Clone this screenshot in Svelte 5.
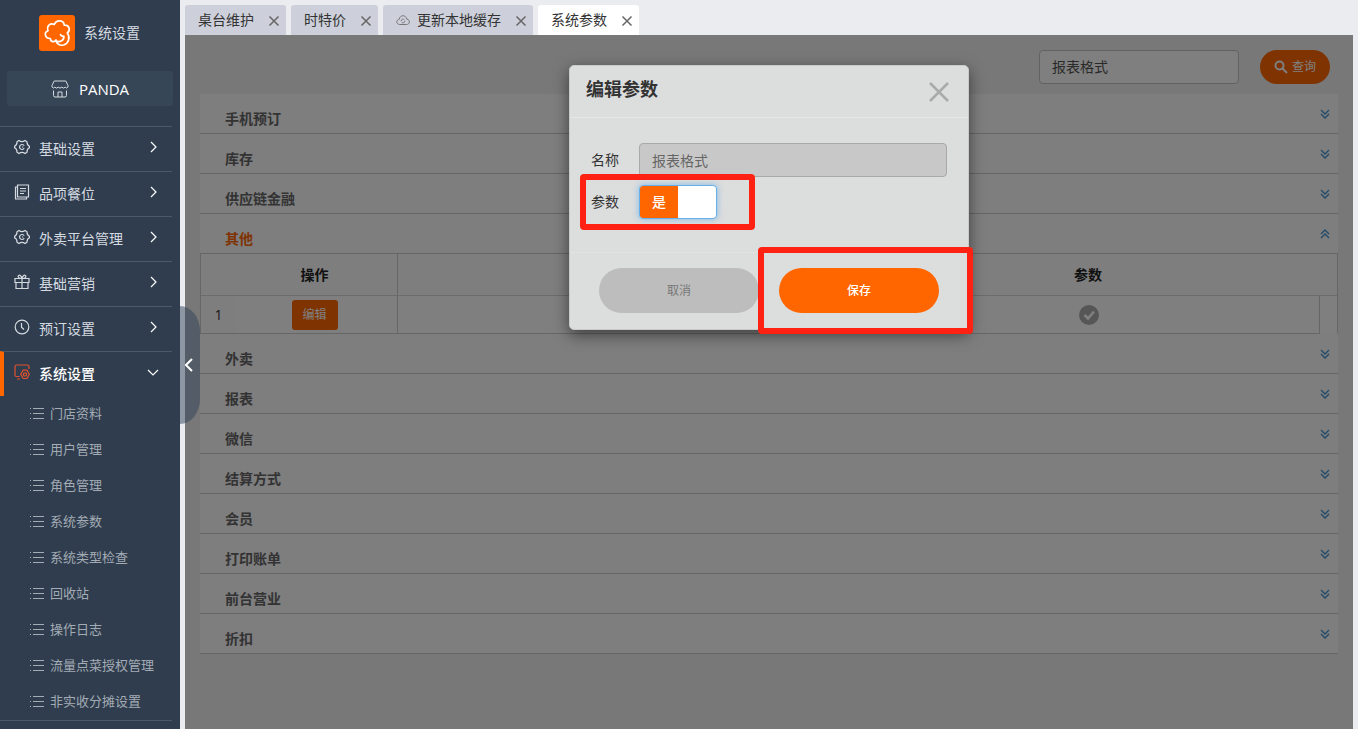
<script>
  let enabled = $state(true);
  let keyword = $state('报表格式');
  let paramName = $state('报表格式');

  const menus = [
    { name: '基础设置', icon: 'gear' },
    { name: '品项餐位', icon: 'doc' },
    { name: '外卖平台管理', icon: 'gear' },
    { name: '基础营销', icon: 'gift' },
    { name: '预订设置', icon: 'clock' }
  ];

  const subMenus = [
    '门店资料',
    '用户管理',
    '角色管理',
    '系统参数',
    '系统类型检查',
    '回收站',
    '操作日志',
    '流量点菜授权管理',
    '非实收分摊设置'
  ];

  const tabs = [
    { name: '桌台维护' },
    { name: '时特价' },
    { name: '更新本地缓存', cloud: true },
    { name: '系统参数', active: true }
  ];

  const groups = [
    '手机预订',
    '库存',
    '供应链金融',
    '其他',
    '外卖',
    '报表',
    '微信',
    '结算方式',
    '会员',
    '打印账单',
    '前台营业',
    '折扣'
  ];
  let opened = $state('其他');
</script>

{#snippet menuIcon(icon)}
  <svg class="menu-icon" viewBox="0 0 16 16" aria-hidden="true">
    {#if icon === 'gear'}
      <path d="M5 1.5 Q8 3.7 11 1.5 L13 2.8 Q12.8 6 15.4 7.2 V8.8 Q12.8 10 13 13.2 L11 14.5 Q8 12.3 5 14.5 L3 13.2 Q3.2 10 .6 8.8 V7.2 Q3.2 6 3 2.8 Z" />
      <path d="M10.2 6.7 A2.5 2.5 0 1 0 10.2 9.3 M8 8 H9.3" />
    {:else if icon === 'doc'}
      <path d="M3.5 1 H14.5 V13 H3.5 Z M3.5 3 H1.5 V15 H12.5 V13 M6 4.5 H12 M6 7 H12 M6 9.5 H10" />
    {:else if icon === 'gift'}
      <path d="M1 4.5 H15 V8.5 H1 Z M2 8.5 V14.5 H14 V8.5 M8 4.5 V14.5 M8 4.5 C5 4.5 3.5 3 4.5 1.7 C5.8 .4 7.5 2 8 4.5 C8.5 2 10.2 .4 11.5 1.7 C12.5 3 11 4.5 8 4.5" />
    {:else if icon === 'clock'}
      <circle cx="8" cy="8" r="6.8" />
      <path d="M7.5 4 V8.3 L10 10.5" />
    {:else}
      <path d="M5.5 12.5 H2.5 Q1 12.5 1 11 V2.5 Q1 1 2.5 1 H13.5 Q15 1 15 2.5 V5 M3 15 H6" />
      <path d="M9.2 6.2 H13 L15.3 10.2 L13 14.5 H9.2 L6.7 10.2 Z" />
      <circle cx="11" cy="10.4" r="1.6" />
    {/if}
  </svg>
{/snippet}

<div class="layout">
  <aside class="sidebar">
    <div class="brand">
      <svg class="logo" viewBox="0 0 36 36" aria-hidden="true">
        <rect width="36" height="36" rx="3" fill="#ff6600" />
        <path
          d="M17 25 C15.5 27.5 11.5 27.3 11.3 23.5 C6 23.5 4.5 17.5 9 15.7 C7.5 10.5 11.5 7.7 15.3 9.5 C17.5 4.3 25 4.8 25.2 10.2 C30.5 9.8 31.8 15.5 28.3 18 C31.5 22 29.8 28.5 24.5 30 C20.5 31 17.2 28.3 17.2 26 C21 27.5 25.5 25.5 24.8 21.2 C23.2 21.4 22 20.8 21.5 19.6"
          fill="none" stroke="#fff" stroke-width="1.7" stroke-linecap="round" stroke-linejoin="round"
        />
      </svg>
      <span>系统设置</span>
    </div>

    <button class="shop">
      <svg viewBox="0 0 18 18" aria-hidden="true">
        <path d="M3.2 1 H14.8 L17 5.5 V7 Q15.7 9 14.2 7.2 Q12.5 9 10.8 7.2 Q9 9 7.2 7.2 Q5.5 9 3.8 7.2 Q2.3 9 1 7 V5.5 Z M2.5 10.5 V15.5 Q2.5 17 4 17 H14 Q15.5 17 15.5 15.5 V10.5 M7 17 V12 H11 V17" />
      </svg>
      <span>PANDA</span>
    </button>

    <nav>
      {#each menus as menu}
        <a class="menu" href="#menu">
          {@render menuIcon(menu.icon)}
          <span>{menu.name}</span>
          <svg class="arrow" viewBox="0 0 12 12" aria-hidden="true"><path d="M4 1 L9 6 L4 11" /></svg>
        </a>
      {/each}
      <a class="menu current" href="#menu">
        {@render menuIcon('system')}
        <span>系统设置</span>
        <svg class="arrow" viewBox="0 0 12 12" aria-hidden="true"><path d="M1 4 L6 9 L11 4" /></svg>
      </a>
      <ul>
        {#each subMenus as sub}
          <li>
            <a href="#sub">
              <svg viewBox="0 0 14 12" aria-hidden="true">
                <path d="M0 .5 H1 M3 .5 H14 M0 5.5 H1 M3 5.5 H14 M0 10.5 H1 M3 10.5 H14" />
              </svg>
              {sub}
            </a>
          </li>
        {/each}
      </ul>
    </nav>

    <button class="collapse" aria-label="收起">
      <svg viewBox="0 0 8 14" aria-hidden="true"><path d="M7 1 L1 7 L7 13" /></svg>
    </button>
  </aside>

  <main>
    <div class="tabs">
      {#each tabs as tab}
        <div class="tab" class:active={tab.active}>
          {#if tab.cloud}
            <svg class="cloud" viewBox="0 0 14 12" aria-hidden="true">
              <path d="M3.8 10.5 C0 10.5 -.2 5.8 3.2 5.4 C3.6 .8 10.2 .4 10.8 5.2 C14.4 5.6 14.2 10.5 10.5 10.5 Z M5.2 7 A1.8 1.8 0 0 1 8.5 6 M8.8 7 A1.8 1.8 0 0 1 5.5 8" />
            </svg>
          {/if}
          <span>{tab.name}</span>
          <button class="tab-close" aria-label="关闭">
            <svg viewBox="0 0 12 12" aria-hidden="true"><path d="M1.5 1.5 L10.5 10.5 M10.5 1.5 L1.5 10.5" /></svg>
          </button>
        </div>
      {/each}
    </div>

    <section class="content">
      <div class="toolbar">
        <input type="text" aria-label="参数名称" bind:value={keyword} />
        <button class="search">
          <svg viewBox="0 0 14 14" aria-hidden="true">
            <circle cx="5.5" cy="5.5" r="4" />
            <path d="M8.5 8.5 L13 13" />
          </svg>
          查询
        </button>
      </div>

      {#each groups as group}
        <button class="group" class:open={group === opened} onclick={() => (opened = group)}>
          <span>{group}</span>
          <svg viewBox="0 0 10 10" aria-hidden="true"><path d="M1 1 L5 5 L9 1 M1 5 L5 9 L9 5" /></svg>
        </button>
        {#if group === opened}
          <table>
            <colgroup>
              <col class="col-no" />
              <col class="col-action" />
              <col />
              <col />
              <col class="col-gutter" />
            </colgroup>
            <thead>
              <tr>
                <th></th>
                <th class="line action">操作</th>
                <th></th>
                <th class="line param" colspan="2">参数</th>
              </tr>
            </thead>
            <tbody>
              <tr>
                <td class="no">1</td>
                <td class="line action"><button class="edit">编辑</button></td>
                <td></td>
                <td class="line">
                  <svg class="check" viewBox="0 0 20 20" role="img" aria-label="是">
                    <circle cx="10" cy="10" r="10" fill="#acacac" />
                    <path d="M5.5 10 L9 13.5 L15 6.5" fill="none" stroke="#fff" stroke-width="2.6" />
                  </svg>
                </td>
                <td class="line gutter"></td>
              </tr>
            </tbody>
          </table>
        {/if}
      {/each}

      <div class="backdrop">
        <div class="modal" role="dialog" aria-labelledby="modal-title">
          <header>
            <h2 id="modal-title">编辑参数</h2>
            <button class="modal-close" aria-label="关闭">
              <svg viewBox="0 0 20 20" aria-hidden="true"><path d="M1 1 L19 19 M19 1 L1 19" /></svg>
            </button>
          </header>
          <div class="form">
            <div class="field">
              <label for="param-name">名称</label>
              <input id="param-name" type="text" bind:value={paramName} readonly />
            </div>
            <div class="field">
              <label for="param-value">参数</label>
              <div class="switch" class:off={!enabled}>
                <input id="param-value" type="checkbox" bind:checked={enabled} />
                <span>{enabled ? '是' : '否'}</span>
              </div>
            </div>
            <div class="mark mark-switch"></div>
          </div>
          <footer>
            <button class="cancel">取消</button>
            <button class="save">保存</button>
            <div class="mark mark-save"></div>
          </footer>
        </div>
      </div>
    </section>
  </main>
</div>

<style>
  :global(body) {
    background: #ebecf0;
    font-family: "Liberation Sans", "Noto Sans CJK SC", sans-serif;
    font-size: 14px;
    line-height: 20px;
    color: #333;
  }

  * {
    box-sizing: border-box;
  }

  button,
  input {
    font: inherit;
  }

  button {
    padding: 0;
    border: none;
    background: none;
    cursor: pointer;
  }

  svg {
    display: block;
    flex: none;
    fill: none;
    stroke: currentColor;
  }

  a {
    color: inherit;
    text-decoration: none;
  }

  .layout {
    display: flex;
    min-height: 100vh;
  }

  /* sidebar */
  .sidebar {
    position: relative;
    z-index: 2;
    flex: none;
    width: 180px;
    padding-right: 8px;
    background: #2f3d4e;
    color: #d5dae0;
  }

  .brand {
    display: flex;
    align-items: center;
    gap: 9px;
    padding: 15px 0 0 39px;
  }

  .logo {
    width: 36px;
    height: 36px;
    stroke: none;
  }

  .shop {
    display: flex;
    align-items: center;
    justify-content: center;
    gap: 10px;
    width: 166px;
    height: 35px;
    margin: 20px 0 20px 7px;
    border-radius: 3px;
    background: #374657;
    color: #fff;
    font-family: "Open Sans", sans-serif;
    font-size: 15px;
    line-height: 18px;
  }

  .shop svg {
    width: 18px;
    height: 18px;
    color: #d5dae0;
  }

  .menu {
    display: flex;
    align-items: center;
    height: 45px;
    padding: 0 13px 0 14px;
    border-top: 1px solid #4b5a6a;
  }

  .menu span {
    flex: 1;
    padding-left: 9px;
  }

  .menu-icon {
    width: 16px;
    height: 16px;
    margin-bottom: 4px;
    stroke-width: 1.2;
  }

  .arrow {
    width: 12px;
    height: 12px;
    margin-bottom: 4px;
    color: #fff;
    stroke-width: 1.2;
  }

  .menu.current {
    border-left: 4px solid #ff6600;
    padding-left: 10px;
    color: #fff;
    font-weight: 500;
  }

  .current .menu-icon {
    color: #e0532f;
  }

  ul {
    margin: 0;
    padding: 0;
    list-style: none;
    border-bottom: 1px solid #4b5a6a;
  }

  li a {
    display: flex;
    align-items: center;
    gap: 6px;
    height: 36px;
    padding-left: 30px;
    color: #a3abb4;
    font-size: 13px;
    white-space: nowrap;
  }

  li svg {
    width: 14px;
    height: 12px;
  }

  .collapse {
    position: absolute;
    top: 306px;
    left: 100%;
    width: 20px;
    height: 118px;
    padding-left: 5px;
    border-radius: 0 24px 24px 0 / 0 30px 30px 0;
    background: rgba(47, 66, 86, 0.5);
    color: #fff;
  }

  .collapse svg {
    width: 8px;
    height: 14px;
    stroke-width: 2;
  }

  /* tabs */
  main {
    display: flex;
    flex: 1;
    flex-direction: column;
    min-width: 0;
    margin: 0 5px;
  }

  .tabs {
    display: flex;
    gap: 5px;
    padding-top: 5px;
  }

  .tab {
    display: flex;
    align-items: center;
    height: 30px;
    padding: 0 6px 0 13px;
    border-radius: 3px 3px 0 0;
    background: #cdd0da;
    white-space: nowrap;
  }

  .tab.active {
    background: #fff;
  }

  .cloud {
    width: 14px;
    height: 12px;
    margin-right: 7px;
    color: #777;
  }

  .tab-close {
    margin: 2px 0 0 14px;
    color: #666;
  }

  .tab-close svg {
    width: 12px;
    height: 12px;
    stroke-width: 1.5;
  }

  /* content */
  .content {
    position: relative;
    flex: 1;
    padding: 15px;
    background: #f0f0f0;
  }

  .toolbar {
    display: flex;
    justify-content: flex-end;
    gap: 21px;
    height: 34px;
    margin-bottom: 10px;
    padding-right: 8px;
  }

  .toolbar input {
    width: 200px;
    padding: 0 12px;
    border: 1px solid #c4c4c4;
    border-radius: 4px;
    background: #fff;
    color: #555;
  }

  .search {
    display: flex;
    align-items: center;
    justify-content: center;
    gap: 4px;
    width: 70px;
    border-radius: 17px;
    background: #ff6600;
    color: #fff;
    font-size: 12px;
  }

  .search svg {
    width: 14px;
    height: 14px;
    stroke-width: 2;
  }

  .group {
    display: flex;
    align-items: center;
    justify-content: space-between;
    width: 100%;
    height: 40px;
    padding: 0 8px 0 25px;
    border-bottom: 1px solid #cdcdcd;
    background: #fcfcfe;
    color: #666;
    font-weight: bold;
  }

  .group span {
    padding-top: 10px;
  }

  .group svg {
    width: 10px;
    height: 10px;
    color: #4594d0;
    stroke-width: 1.3;
  }

  .group.open {
    color: #ff6600;
  }

  .open svg {
    transform: rotate(180deg);
  }

  table {
    width: 100%;
    table-layout: fixed;
    border-collapse: separate;
    border-spacing: 0;
    border-left: 1px solid #cdcdcd;
    background: #fcfcfe;
  }

  .col-no {
    width: 35px;
  }

  .col-action {
    width: 162px;
  }

  .col-gutter {
    width: 18px;
  }

  th,
  td {
    padding: 0;
    border-bottom: 1px solid #d8d8d8;
    text-align: center;
  }

  th {
    height: 42px;
    color: #222;
  }

  td {
    height: 38px;
    border-color: #cdcdcd;
    background: #fff;
  }

  .no {
    background: #fcfcfe;
    font-family: "Open Sans", sans-serif;
  }

  .line {
    border-right: 1px solid #cdcdcd;
  }

  .action {
    padding-right: 4px;
  }

  .param {
    padding-right: 20px;
  }

  .gutter {
    border-bottom-color: #fcfcfe;
  }

  .edit {
    width: 46px;
    height: 30px;
    border-radius: 3px;
    background: #ff6600;
    color: #fff;
    font-size: 12px;
  }

  .check {
    width: 20px;
    height: 20px;
    margin: 0 auto;
    stroke: none;
  }

  /* modal */
  .backdrop {
    position: absolute;
    inset: 0;
    padding-top: 30px;
    background: rgba(0, 0, 0, 0.5);
  }

  .modal {
    width: 400px;
    margin: 0 auto;
    border: 1px solid #c9caca;
    border-radius: 5px;
    background: #dcdddd;
    box-shadow: 0 5px 15px rgba(0, 0, 0, 0.5);
  }

  header {
    display: flex;
    align-items: center;
    justify-content: space-between;
    height: 52px;
    padding: 0 19px 0 16px;
    border-bottom: 1px solid #e6e6e6;
  }

  h2 {
    margin: 0;
    padding-bottom: 4px;
    font-size: 18px;
    line-height: 24px;
  }

  .modal-close {
    color: #aaa;
  }

  .modal-close svg {
    width: 20px;
    height: 20px;
    stroke-width: 2.5;
  }

  .form {
    position: relative;
    display: flex;
    flex-direction: column;
    gap: 8px;
    height: 134px;
    padding: 25px 21px 0;
  }

  .field {
    display: flex;
    align-items: center;
    gap: 20px;
    height: 34px;
  }

  .field > input {
    flex: 1;
    min-width: 0;
    height: 34px;
    padding: 0 12px;
    border: 1px solid #a9a9a9;
    border-radius: 4px;
    background: #c8c8c8;
    color: #666;
  }

  .switch {
    position: relative;
    display: flex;
    width: 78px;
    height: 34px;
    overflow: hidden;
    border: 1px solid #66afe9;
    border-radius: 4px;
    background: #fff;
    box-shadow: 0 0 6px rgba(102, 175, 233, 0.8);
  }

  .switch span {
    width: 38px;
    background: #ff6600;
    color: #fff;
    font-weight: 500;
    line-height: 32px;
    text-align: center;
  }

  .switch.off {
    justify-content: flex-end;
  }

  .switch.off span {
    background: #999;
  }

  .switch input {
    position: absolute;
    inset: 0;
    width: 100%;
    height: 100%;
    margin: 0;
    opacity: 0;
    cursor: pointer;
  }

  footer {
    position: relative;
    display: flex;
    gap: 20px;
    padding: 15px 29px 16px;
    border-top: 1px solid #e2e2e2;
  }

  footer button {
    flex: 1;
    height: 45px;
    border-radius: 23px;
    font-size: 12px;
  }

  .cancel {
    background: #bdbdbd;
    color: #777;
  }

  .save {
    background: #ff6600;
    color: #fff;
    font-weight: 500;
  }

  .mark {
    position: absolute;
    border: 6px solid #ff2213;
    border-radius: 4px;
    pointer-events: none;
  }

  .mark-switch {
    top: 56px;
    left: 10px;
    width: 175px;
    height: 56px;
  }

  .mark-save {
    top: -6px;
    right: -5px;
    width: 215px;
    height: 87px;
  }
</style>
